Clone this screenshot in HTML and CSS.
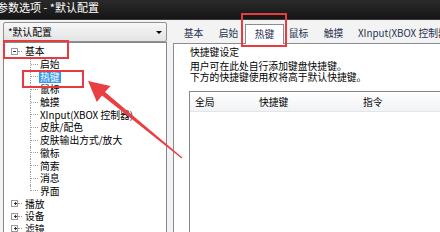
FILE: index.html
```html
<!DOCTYPE html>
<html lang="zh">
<head>
<meta charset="utf-8">
<title>参数选项</title>
<link rel="stylesheet" href="styles.css">
</head>
<body>
<div class="titlebar"><span class="title">参数选项 - *默认配置</span></div>
<div class="main">
  <div class="left">
    <div class="combo"><span>*默认配置</span><span class="caret"></span></div>
    <div class="tree">
      <div class="row root"><i class="box minus"></i><i class="stub"></i><span class="lbl">基本</span></div>
      <div class="children">
        <div class="row"><i class="ln"></i><span class="lbl">启始</span></div>
        <div class="row"><i class="ln"></i><span class="lbl sel">热键</span></div>
        <div class="row"><i class="ln"></i><span class="lbl">鼠标</span></div>
        <div class="row"><i class="ln"></i><span class="lbl">触摸</span></div>
        <div class="row"><i class="ln"></i><span class="lbl">XInput(XBOX 控制器)</span></div>
        <div class="row"><i class="ln"></i><span class="lbl">皮肤/配色</span></div>
        <div class="row"><i class="ln"></i><span class="lbl">皮肤输出方式/放大</span></div>
        <div class="row"><i class="ln"></i><span class="lbl">徽标</span></div>
        <div class="row"><i class="ln"></i><span class="lbl">简索</span></div>
        <div class="row"><i class="ln"></i><span class="lbl">消息</span></div>
        <div class="row"><i class="ln last"></i><span class="lbl">界面</span></div>
      </div>
      <div class="row root"><i class="box plus"></i><i class="stub"></i><span class="lbl">播放</span></div>
      <div class="row root"><i class="box plus"></i><i class="stub"></i><span class="lbl">设备</span></div>
      <div class="row root"><i class="box plus"></i><i class="stub"></i><span class="lbl">滤镜</span></div>
    </div>
  </div>
  <div class="right">
    <div class="tabs">
      <div class="tab">基本</div>
      <div class="tab">启始</div>
      <div class="tab active">热键</div>
      <div class="tab">鼠标</div>
      <div class="tab">触摸</div>
      <div class="tab wide">XInput(XBOX 控制器</div>
    </div>
    <div class="panel">
      <div class="group-title">快捷键设定</div>
      <div class="desc">
        <div>用户可在此处自行添加键盘快捷键。</div>
        <div>下方的快捷键使用权将高于默认快捷键。</div>
      </div>
      <div class="list">
        <div class="list-head">
          <span class="col c1">全局</span>
          <span class="col c2">快捷键</span>
          <span class="col c3">指令</span>
        </div>
      </div>
    </div>
  </div>
</div>
<svg class="overlay" width="440" height="232" viewBox="0 0 440 232">
  <rect x="4" y="41" width="64" height="17" fill="none" stroke="#e63c3f" stroke-width="2"/>
  <rect x="242" y="14" width="44" height="32" fill="none" stroke="#e63c3f" stroke-width="2"/>
  <rect x="23" y="71" width="60" height="16" fill="none" stroke="#e63c3f" stroke-width="2"/>
  <polygon fill="#ea3f42" points="88,81 110.5,86 105,91.9 182.4,157.5 181.6,158.5 102.1,95.6 96.8,102"/>
</svg>
</body>
</html>
```
FILE: styles.css
```css
html, body {
  margin: 0;
  padding: 0;
}
body {
  width: 440px;
  height: 232px;
  overflow: hidden;
  position: relative;
  background: #f3f3f3;
  font-family: "Noto Sans CJK SC", "Noto Sans", sans-serif;
  font-size: 9.8px;
  color: #000;
}
.titlebar {
  height: 20px;
  box-sizing: border-box;
  background: linear-gradient(#2a2a2a, #151515);
  border-bottom: 1px solid #3a3a3a;
  color: #fff;
  font-size: 11px;
  line-height: 15px;
  white-space: nowrap;
  overflow: hidden;
}
.title {
  display: inline-block;
  margin-left: -3px;
}
.main {
  display: flex;
  padding: 2px 0 0 3px;
  height: 212px;
  box-sizing: border-box;
}
.left {
  width: 164px;
  flex: none;
  display: flex;
  flex-direction: column;
}
.combo {
  height: 21px;
  box-sizing: border-box;
  border: 1px solid #8f9094;
  border-radius: 2px;
  background: linear-gradient(#f7f7f7, #e3e3e3);
  display: flex;
  align-items: center;
  justify-content: space-between;
  padding: 0 3px 0 4px;
  line-height: 18px;
}
.caret {
  width: 0;
  height: 0;
  border-left: 3px solid transparent;
  border-right: 3px solid transparent;
  border-top: 3px solid #000;
  margin-right: 1px;
}
.tree {
  flex: 1;
  border: 1px solid #828790;
  border-bottom: none;
  background: #fff;
  padding-top: 2px;
}
.row {
  height: 12.7px;
  display: flex;
  align-items: center;
  white-space: nowrap;
  line-height: 12px;
}
.root {
  padding-left: 7px;
}
.box {
  width: 7px;
  height: 7px;
  box-sizing: border-box;
  border: 1px solid #9a9a9a;
  background: #fff;
  display: flex;
  align-items: center;
  justify-content: center;
  flex: none;
}
.box::before {
  content: "";
  width: 3px;
  height: 1px;
  background: #333;
}
.box.plus::after {
  content: "";
  width: 1px;
  height: 3px;
  background: #333;
  margin-left: -2px;
}
.stub {
  width: 4px;
  border-top: 1px dotted #9a9a9a;
  flex: none;
  margin-right: 1px;
}
.children {
  padding-left: 26px;
}
.ln {
  width: 7px;
  height: 100%;
  flex: none;
  border-left: 1px dotted #a0a0a0;
  display: flex;
  align-items: center;
  align-self: stretch;
}
.ln::after {
  content: "";
  width: 7px;
  border-top: 1px dotted #a0a0a0;
}
.ln.last {
  height: 50%;
  align-self: flex-start;
  align-items: flex-end;
}
.lbl {
  padding: 0 1px;
  margin-left: 1px;
}
.sel {
  background: #3397f0;
  color: #fff;
}
.right {
  flex: 1;
  min-width: 0;
  margin-left: 6px;
  display: flex;
  flex-direction: column;
}
.tabs {
  height: 21px;
  flex: none;
  display: flex;
  align-items: flex-end;
  padding-left: 3px;
  white-space: nowrap;
  color: #1e3250;
}
.tab {
  width: 35px;
  height: 17px;
  line-height: 15px;
  text-align: center;
  flex: none;
}
.tab.active {
  width: 35px;
  height: 19px;
  padding: 0 1px;
  margin: 0 -3px -1px -1px;
  border: 1px solid #898c95;
  border-bottom: none;
  background: #fff;
  position: relative;
  z-index: 1;
  line-height: 18px;
}
.tab.wide {
  width: auto;
  text-align: left;
  padding-left: 7px;
}
.panel {
  flex: 1;
  border-top: 1px solid #898c95;
  border-left: 1px solid #898c95;
  background: #fff;
  padding: 3px 0 0 16px;
  display: flex;
  flex-direction: column;
}
.group-title {
  line-height: 11px;
}
.desc {
  margin-top: 3px;
  line-height: 11px;
  white-space: nowrap;
}
.list {
  margin-top: 8px;
  margin-left: -1px;
  flex: 1;
  border: 1px solid #828790;
  border-right: none;
  border-bottom: none;
  background: #fff;
}
.list-head {
  height: 19px;
  display: flex;
  align-items: center;
  background: linear-gradient(#ffffff, #f1f2f4);
  border-bottom: 1px solid #e3e5e8;
  padding-left: 5px;
}
.col {
  flex: none;
}
.c1 { width: 64px; }
.c2 { width: 104px; }
.overlay {
  position: absolute;
  left: 0;
  top: 0;
  pointer-events: none;
}
```
